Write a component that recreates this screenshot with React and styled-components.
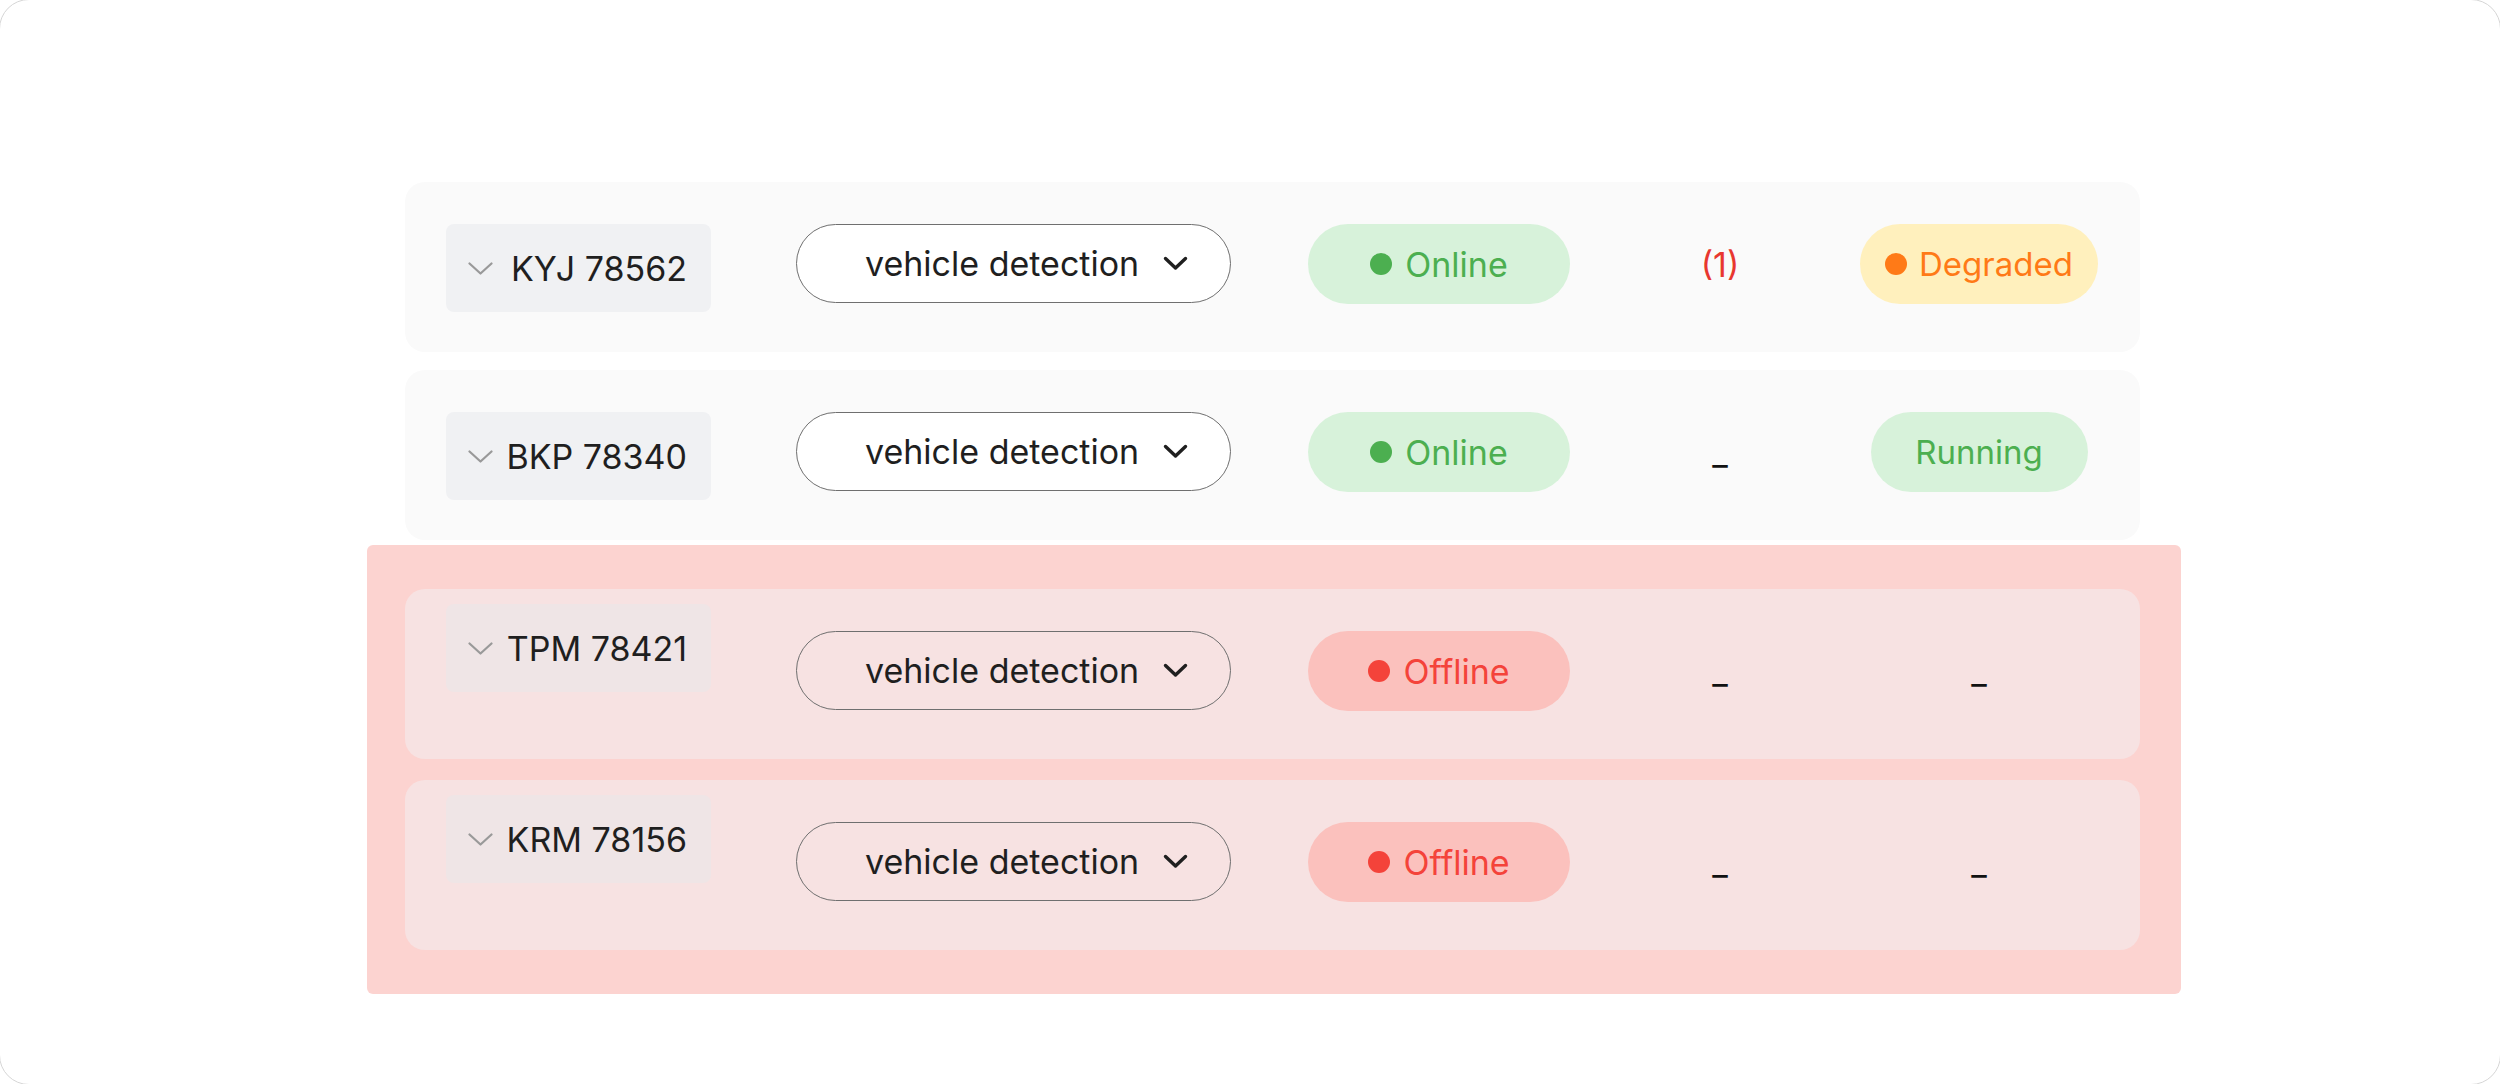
import React from 'react';
import styled, {createGlobalStyle, css} from 'styled-components';

const GlobalStyle = createGlobalStyle`
    html, body {
        margin:0;
        padding:0;
        background:#ffffff;
        overflow:hidden;
    }
    body {
        font-family: Inter, "Noto Sans", sans-serif;
        color:#1f1f1f;
    }
`;

// the outline of the frame sits just outside the viewport: only its corners show
const Frame = styled.div`
    box-sizing:border-box;
    width:2502px;
    height:1086px;
    margin:-1px;
    border:1px solid #d6d6d6;
    border-radius:30px;
    background:#ffffff;
    padding:182px 0 0 405px;
`;

const Table = styled.div`
    display:flex;
    flex-direction:column;
    width:1735px;
`;

const NormalRows = styled.div`
    display:flex;
    flex-direction:column;
    gap:18px;
`;

const ErrorGroup = styled.div`
    display:flex;
    flex-direction:column;
    gap:21px;
    margin:5px -41px 0 -38px;
    padding:44px 41px 44px 38px;
    background:#fcd3d0;
    border-radius:6px;
`;

const Card = styled.div`
    box-sizing:border-box;
    height:170px;
    display:grid;
    grid-template-columns:350px 512px 262px 300px 218px;
    align-items:start;
    padding:42px 0 0 41px;
    border-radius:20px;
    background:${p => p.$error ? '#f7e2e2' : '#fafafa'};
`;

const Plate = styled.div`
    box-sizing:border-box;
    width:265px;
    height:88px;
    display:flex;
    align-items:center;
    justify-content:space-between;
    padding:0 24px 0 22px;
    border-radius:8px;
    font-size:34px;
    white-space:nowrap;
    color:#1f1f1f;
    background:${p => p.$error ? '#efe5e6' : '#f0f1f3'};
    ${p => p.$error && css`
        margin-top:-27px;
    `}
`;

const Dropdown = styled.button`
    box-sizing:border-box;
    width:435px;
    height:79px;
    display:flex;
    align-items:center;
    gap:24px;
    padding:0 40px 0 68px;
    border:1.5px solid #6f6f6f;
    border-radius:40px;
    font-family:Inter, "Noto Sans", sans-serif;
    font-size:34px;
    white-space:nowrap;
    color:#1f1f1f;
    background:${p => p.$error ? 'transparent' : '#ffffff'};
    cursor:pointer;
`;

const statusTones = {
    online: {bg: '#d7f2da', fg: '#4caf50'},
    offline: {bg: '#fbc1bd', fg: '#f4433a'},
};

const StatusPill = styled.div`
    box-sizing:border-box;
    width:262px;
    height:80px;
    display:flex;
    align-items:center;
    justify-content:center;
    gap:13px;
    border-radius:40px;
    font-size:34px;
    background:${p => statusTones[p.$tone].bg};
    color:${p => statusTones[p.$tone].fg};
`;

const Dot = styled.span`
    width:22px;
    height:22px;
    border-radius:50%;
    background:currentColor;
    flex-shrink:0;
`;

const Cell = styled.div`
    height:80px;
    display:flex;
    align-items:center;
    justify-content:center;
    font-size:34px;
`;

const AlertCount = styled.span`
    color:#e8372f;
`;

const Empty = styled.span`
    color:#111111;
`;

const stateTones = {
    degraded: {bg: '#fff0bd', fg: '#ff7a17'},
    running: {bg: '#d7f2da', fg: '#4caf50'},
};

const StatePill = styled.div`
    box-sizing:border-box;
    min-width:217px;
    height:80px;
    flex-shrink:0;
    display:flex;
    align-items:center;
    justify-content:center;
    gap:12px;
    padding:0 25px;
    border-radius:40px;
    font-size:33px;
    background:${p => stateTones[p.$tone].bg};
    color:${p => stateTones[p.$tone].fg};
`;

const SmallChevron = () => (
    <svg width="25" height="13" viewBox="0 0 25 13" fill="none">
        <path d="M1.5 1.5 L12.5 11.5 L23.5 1.5" stroke="#999999" strokeWidth="2.2" strokeLinecap="round" strokeLinejoin="round"/>
    </svg>
);

const Chevron = () => (
    <svg width="25" height="15" viewBox="0 0 25 15" fill="none">
        <path d="M2.5 2.5 L12.5 12 L22.5 2.5" stroke="#1f1f1f" strokeWidth="3.4" strokeLinecap="round" strokeLinejoin="round"/>
    </svg>
);

const VehicleRow = ({plate, status, alerts, state, error}) => (
    <Card $error={error}>
        <Plate $error={error}>
            <SmallChevron/>
            <span>{plate}</span>
        </Plate>
        <div>
            <Dropdown $error={error}>
                <span>vehicle detection</span>
                <Chevron/>
            </Dropdown>
        </div>
        <StatusPill $tone={status}>
            <Dot/>
            {status === 'online' ? 'Online' : 'Offline'}
        </StatusPill>
        <Cell>
            {alerts ? <AlertCount>({alerts})</AlertCount> : <Empty>_</Empty>}
        </Cell>
        <Cell>
            {state === 'degraded' && <StatePill $tone="degraded"><Dot/>Degraded</StatePill>}
            {state === 'running' && <StatePill $tone="running">Running</StatePill>}
            {!state && <Empty>_</Empty>}
        </Cell>
    </Card>
);

const vehicles = [
    {plate: 'KYJ 78562', status: 'online', alerts: 1, state: 'degraded'},
    {plate: 'BKP 78340', status: 'online', alerts: 0, state: 'running'},
];

const offlineVehicles = [
    {plate: 'TPM 78421', status: 'offline', alerts: 0, state: null},
    {plate: 'KRM 78156', status: 'offline', alerts: 0, state: null},
];

const App = () => (
    <>
        <GlobalStyle/>
        <Frame>
            <Table>
                <NormalRows>
                    {vehicles.map(v => <VehicleRow key={v.plate} {...v}/>)}
                </NormalRows>
                <ErrorGroup>
                    {offlineVehicles.map(v => <VehicleRow key={v.plate} error {...v}/>)}
                </ErrorGroup>
            </Table>
        </Frame>
    </>
);

export default App;
